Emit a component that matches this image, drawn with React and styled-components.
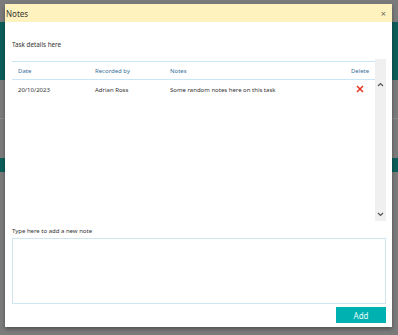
import styled, { createGlobalStyle } from "styled-components";

const GlobalStyle = createGlobalStyle`
  html, body {
    margin: 0;
    padding: 0;
    background: #7b7b7b;
    font-family: "Noto Sans", "Open Sans", sans-serif;
  }
`;

const notes = [
  {
    date: "20/10/2023",
    by: "Adrian Ross",
    text: "Some random notes here on this task",
  },
];

// dimmed page behind the dialog
const Backdrop = styled.div`
  position: relative;
  width: 398px;
  height: 335px;
  overflow: hidden;
  background: #7b7b7b;
  display: flex;
  flex-direction: column;
`;

const Banner = styled.div`
  margin-top: 22px;
  height: 58px;
  display: flex;
  justify-content: space-between;
`;

const BannerSide = styled.div`
  width: 6px;
  background: ${(p) => p.$color};
  border-left: ${(p) => (p.$edge ? `3px solid ${p.$edge}` : "none")};
`;

const BgRule = styled.div`
  margin-top: 38px;
  height: 1px;
  background: #8a8a8a;
`;

const BgBand = styled.div`
  margin-top: 39px;
  height: 14px;
  background: #0d5e5a;
`;

const Dialog = styled.div`
  position: absolute;
  left: 5px;
  top: 4px;
  width: 387px;
  height: 323px;
  background: #fff;
  box-shadow: 0 2px 4px rgba(0, 0, 0, 0.35);
  display: flex;
  flex-direction: column;
`;

const Header = styled.div`
  height: 20px;
  background: #fef2be;
  display: flex;
  align-items: center;
  justify-content: space-between;
  padding: 0 6px 0 1px;
  font-size: 8px;
  color: #333;
`;

const Close = styled.span`
  font-size: 9px;
  color: #666;
`;

const Body = styled.div`
  flex: 1;
  padding: 18px 6px 4px 7px;
  display: flex;
  flex-direction: column;
`;

const Caption = styled.div`
  font-size: 6.3px;
  color: #333;
  line-height: 10px;
`;

const TableWrap = styled.div`
  margin-top: 9px;
  height: 162px;
  display: flex;
`;

const Table = styled.div`
  flex: 1;
  padding-top: 2px;
  display: flex;
  flex-direction: column;
`;

const Row = styled.div`
  display: grid;
  grid-template-columns: 77px 75px 1fr 30px;
  align-items: center;
  height: ${(p) => (p.$head ? "17px" : "19px")};
  padding-left: 6px;
  border-top: ${(p) => (p.$head ? "1px solid #c8e6f5" : "none")};
  border-bottom: ${(p) => (p.$head ? "1px solid #c8e6f5" : "none")};
  font-size: 6px;
  color: ${(p) => (p.$head ? "#3b6f98" : "#333")};
`;

const Cell = styled.div`
  white-space: nowrap;
  text-align: ${(p) => (p.$center ? "center" : "left")};
`;

const Scrollbar = styled.div`
  width: 11px;
  background: #f0f0f0;
  display: flex;
  flex-direction: column;
  justify-content: space-between;
  align-items: center;
  padding: 23px 0 4px;
`;

const Label = styled.div`
  margin-top: 6px;
  font-size: 6px;
  color: #333;
  line-height: 9px;
`;

const NoteInput = styled.textarea`
  margin-top: 2px;
  height: 66px;
  border: 1px solid #cfe5f0;
  resize: none;
  outline: none;
  padding: 3px;
  box-sizing: border-box;
`;

const Footer = styled.div`
  display: flex;
  justify-content: flex-end;
  margin-top: 3px;
`;

const AddButton = styled.button`
  width: 50px;
  height: 16px;
  border: none;
  background: #00b1b2;
  color: #eafafa;
  font-family: inherit;
  font-size: 8px;
  padding: 0;
`;

const Caret = ({ up }) => (
  <svg width="7" height="5" viewBox="0 0 7 5">
    <path
      d={up ? "M1 4 L3.5 1.5 L6 4" : "M1 1 L3.5 3.5 L6 1"}
      fill="none"
      stroke="#555"
      strokeWidth="1.2"
    />
  </svg>
);

const DeleteIcon = () => (
  <svg width="8" height="8" viewBox="0 0 8 8">
    <path d="M1 1 L7 7 M7 1 L1 7" stroke="#e8331c" strokeWidth="1.5" />
  </svg>
);

export default function App() {
  return (
    <>
      <GlobalStyle />
      <Backdrop>
        <Banner>
          <BannerSide $color="#0d5e5a" />
          <BannerSide $color="#0d5e5a" $edge="#5b1a30" />
        </Banner>
        <BgRule />
        <BgBand />
        <Dialog>
          <Header>
            <span>Notes</span>
            <Close>×</Close>
          </Header>
          <Body>
            <Caption>Task details here</Caption>
            <TableWrap>
              <Table>
                <Row $head>
                  <Cell>Date</Cell>
                  <Cell>Recorded by</Cell>
                  <Cell>Notes</Cell>
                  <Cell $center>Delete</Cell>
                </Row>
                {notes.map((n) => (
                  <Row key={n.date + n.by}>
                    <Cell>{n.date}</Cell>
                    <Cell>{n.by}</Cell>
                    <Cell>{n.text}</Cell>
                    <Cell $center>
                      <DeleteIcon />
                    </Cell>
                  </Row>
                ))}
              </Table>
              <Scrollbar>
                <Caret up />
                <Caret />
              </Scrollbar>
            </TableWrap>
            <Label>Type here to add a new note</Label>
            <NoteInput />
            <Footer>
              <AddButton>Add</AddButton>
            </Footer>
          </Body>
        </Dialog>
      </Backdrop>
    </>
  );
}
